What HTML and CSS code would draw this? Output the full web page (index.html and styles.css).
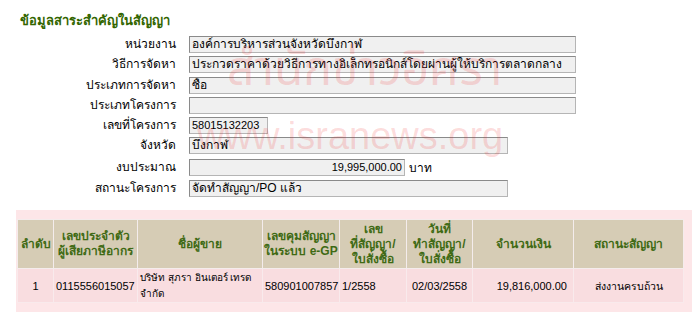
FILE: index.html
```html
<!DOCTYPE html>
<html lang="th">
<head>
    <meta charset="utf-8">
    <title>ข้อมูลสาระสำคัญในสัญญา</title>
    <link rel="stylesheet" href="styles.css">
</head>
<body>
<div class="main">
    <h3 class="title">ข้อมูลสาระสำคัญในสัญญา</h3>
    <div class="info">
        <label>หน่วยงาน</label>
        <div class="field w-full">องค์การบริหารส่วนจังหวัดบึงกาฬ</div>
        <label>วิธีการจัดหา</label>
        <div class="field w-full">ประกวดราคาด้วยวิธีการทางอิเล็กทรอนิกส์โดยผ่านผู้ให้บริการตลาดกลาง</div>
        <label>ประเภทการจัดหา</label>
        <div class="field w-full">ซื้อ</div>
        <label>ประเภทโครงการ</label>
        <div class="field w-full"></div>
        <label>เลขที่โครงการ</label>
        <div class="field w-short num">58015132203</div>
        <label>จังหวัด</label>
        <div class="field w-mid">บึงกาฬ</div>
        <label>งบประมาณ</label>
        <div class="money"><div class="field w-money num">19,995,000.00</div> บาท</div>
        <label>สถานะโครงการ</label>
        <div class="field w-mid">จัดทำสัญญา/PO แล้ว</div>
    </div>

    <div class="contract">
        <table cellspacing="0" cellpadding="0">
            <colgroup>
                <col width="36"><col width="84"><col width="125"><col width="77">
                <col width="67"><col width="66"><col width="101"><col>
            </colgroup>
            <tr>
                <th>ลำดับ</th>
                <th>เลขประจำตัว<br>ผู้เสียภาษีอากร</th>
                <th>ชื่อผู้ขาย</th>
                <th>เลขคุมสัญญา<br>ในระบบ e-GP</th>
                <th>เลข<br>ที่สัญญา/<br>ใบสั่งซื้อ</th>
                <th>วันที่<br>ทำสัญญา/<br>ใบสั่งซื้อ</th>
                <th>จำนวนเงิน</th>
                <th>สถานะสัญญา</th>
            </tr>
            <tr>
                <td align="center">1</td>
                <td>0115556015057</td>
                <td class="vendor">บริษัท สุภรา อินเตอร์ เทรด จำกัด</td>
                <td>580901007857</td>
                <td>1/2558</td>
                <td align="center">02/03/2558</td>
                <td align="right" class="amount">19,816,000.00</td>
                <td align="center" class="small">ส่งงานครบถ้วน</td>
            </tr>
        </table>
    </div>

    <div class="mark mark-th">สำนักข่าวอิศรา</div>
    <div class="mark mark-url">www.isranews.org</div>
</div>
</body>
</html>
```

FILE: styles.css
```css
* {
    margin: 0;
    padding: 0;
    box-sizing: border-box;
}
html, body {
    height: 100%;
    background: #fff;
}
.main {
    position: relative;
    height: 100%;
    font-family: "Liberation Sans", Tahoma, sans-serif;
    font-size: 12px;
    color: #000;
    overflow: hidden;
}
.title {
    padding: 12px 0 0 20px;
    font-size: 13px;
    line-height: 18px;
    color: #336600;
}
.info {
    display: grid;
    grid-template-columns: 176px 1fr;
    column-gap: 13px;
    row-gap: 3.3px;
    margin-top: 6px;
    align-items: center;
}
.info label {
    text-align: right;
    line-height: 17px;
}
.field {
    height: 17px;
    line-height: 15px;
    padding: 0 2px;
    background: #f0f0f0;
    border: 1px solid #8a8a8a;
    border-right-color: #b5b5b5;
    border-bottom-color: #b5b5b5;
    white-space: nowrap;
    overflow: hidden;
}
.field.num {
    font-size: 11px;
}
.w-full { width: 387px; }
.w-short { width: 79px; }
.w-mid { width: 319px; }
.w-money { width: 216px; text-align: right; }
.money {
    display: flex;
    align-items: center;
    gap: 4px;
}
.contract {
    margin: 13px 8px 0 16px;
    padding: 9px 8px 9px 1px;
    background: #fde6e8;
}
.contract table {
    width: 100%;
    table-layout: fixed;
    border-collapse: collapse;
}
.contract th {
    height: 49px;
    background: #d6ccb5;
    color: #3f6a14;
    font-weight: bold;
    font-size: 12px;
    line-height: 15px;
    text-align: center;
    border: 1px solid #f4ecec;
}
.contract td {
    height: 34px;
    background: #f9dde0;
    font-size: 11px;
    line-height: 16px;
    padding: 0 2px;
    border: 1px solid #f9eaec;
}
.contract td.small {
    font-size: 10.5px;
}
.contract td.vendor {
    font-size: 10px;
    padding-right: 0;
}
.contract td.amount {
    padding-right: 6px;
}
.mark {
    position: absolute;
    color: rgba(240, 40, 40, 0.17);
    font-family: "Liberation Sans", "Noto Sans", sans-serif;
    white-space: nowrap;
    pointer-events: none;
}
.mark-th {
    left: 227px;
    top: 34px;
    font-size: 48px;
    font-family: "Noto Sans Thai", "Liberation Sans", sans-serif;
}
.mark-url {
    left: 197px;
    top: 115px;
    font-size: 38px;
}
```
